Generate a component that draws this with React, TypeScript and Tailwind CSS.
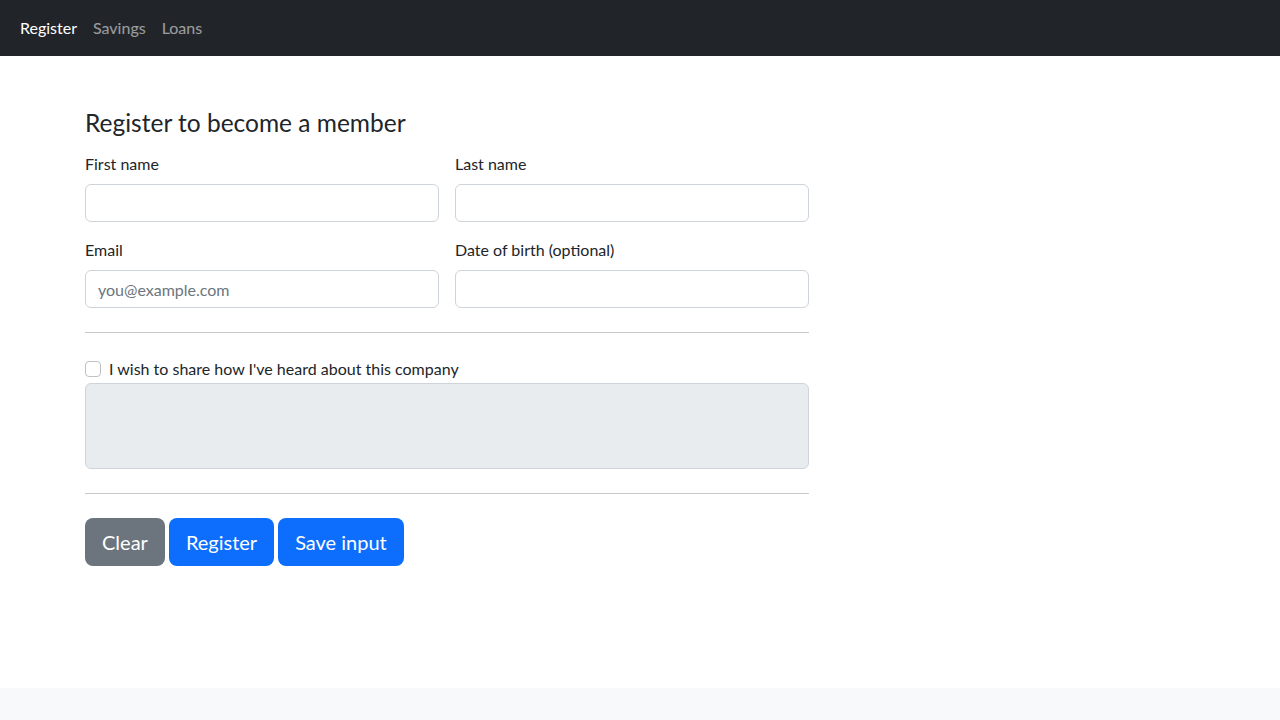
export default function App() {
  return (
    <div
      className="min-h-screen flex flex-col bg-white text-[#212529]"
      style={{ fontFamily: 'Lato, "Noto Sans", sans-serif' }}
    >
      {/* Navbar */}
      <nav className="h-14 bg-[#212529] flex items-center px-3">
        <ul className="flex items-center">
          <li className="px-2 text-base text-white">Register</li>
          <li className="px-2 text-base text-white/55">Savings</li>
          <li className="px-2 text-base text-white/55">Loans</li>
        </ul>
      </nav>

      {/* Main */}
      <main className="flex-1 pt-[52px] px-[85px]">
        <div className="w-[724px]">
          <h4 className="text-[24.5px] leading-[29px] font-normal mb-[15px]">
            Register to become a member
          </h4>

          <div className="grid grid-cols-2 gap-x-4 gap-y-4">
            <div>
              <label className="block text-base leading-6 mb-2">First name</label>
              <input className="block w-full h-[38px] rounded-md border border-[#ced4da] px-3 text-base" />
            </div>
            <div>
              <label className="block text-base leading-6 mb-2">Last name</label>
              <input className="block w-full h-[38px] rounded-md border border-[#ced4da] px-3 text-base" />
            </div>
            <div>
              <label className="block text-base leading-6 mb-2">Email</label>
              <input
                placeholder="you@example.com"
                className="block w-full h-[38px] rounded-md border border-[#ced4da] px-3 text-base placeholder:text-[#6c757d]"
              />
            </div>
            <div>
              <label className="block text-base leading-6 mb-2">Date of birth (optional)</label>
              <input className="block w-full h-[38px] rounded-md border border-[#ced4da] px-3 text-base" />
            </div>
          </div>

          <hr className="my-6 border-t border-[#c8c9ca]" />

          <div className="flex items-center gap-2 h-6">
            <span className="w-4 h-4 rounded border border-[#bfc0c1] bg-white" />
            <label className="text-base leading-6">I wish to share how I've heard about this company</label>
          </div>
          <textarea
            disabled
            className="block w-full h-[86px] mt-0.5 rounded-md border border-[#ced4da] bg-[#e9ecef] resize-none"
          />

          <hr className="my-6 border-t border-[#c8c9ca]" />

          <div className="flex gap-1">
            <button className="h-12 px-[17px] rounded-lg bg-[#6c757d] text-white text-xl">Clear</button>
            <button className="h-12 px-[17px] rounded-lg bg-[#0d6efd] text-white text-xl">Register</button>
            <button className="h-12 px-[17px] rounded-lg bg-[#0d6efd] text-white text-xl">Save input</button>
          </div>
        </div>
      </main>

      {/* Footer */}
      <footer className="h-8 bg-[#f8f9fa]" />
    </div>
  );
}
